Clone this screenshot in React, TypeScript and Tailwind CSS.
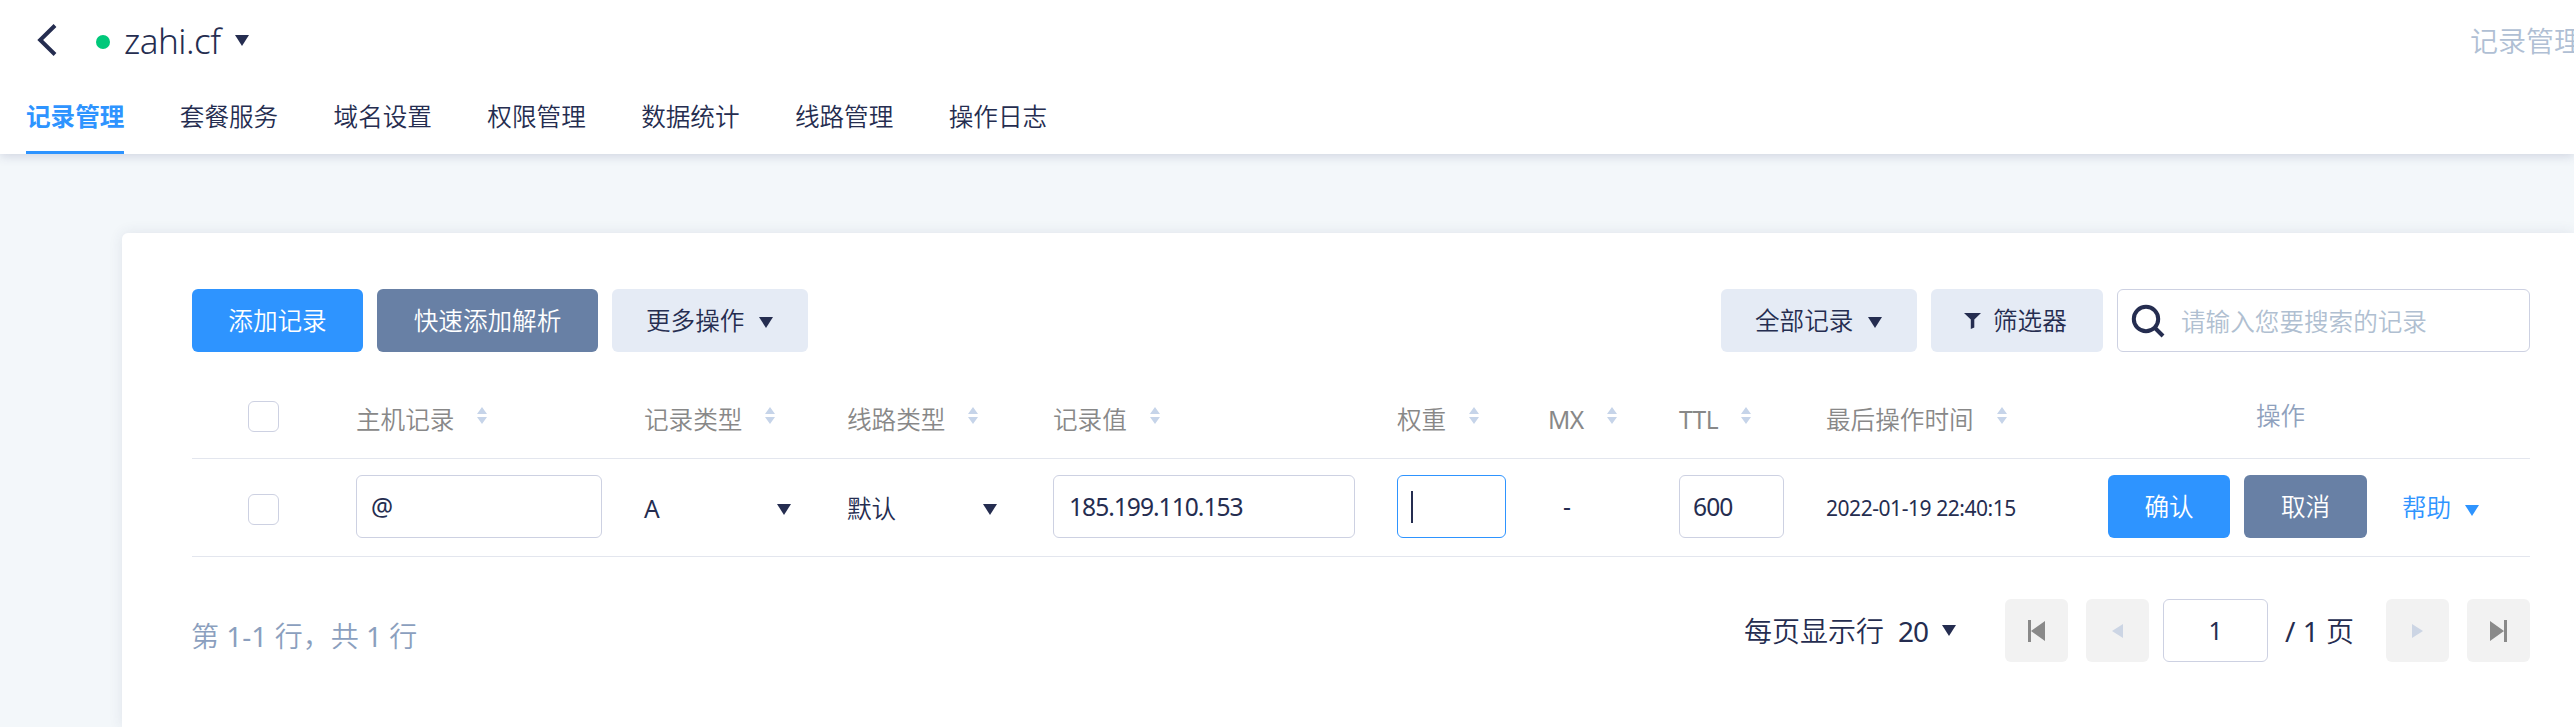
import type { ReactNode } from "react";

const tabs = ["记录管理", "套餐服务", "域名设置", "权限管理", "数据统计", "线路管理", "操作日志"];

const columns = ["主机记录", "记录类型", "线路类型", "记录值", "权重", "MX", "TTL", "最后操作时间"];

const rowGrid =
  "grid grid-cols-[164px_288px_203px_206px_344px_151px_131px_147px_282px_422px] border-b border-[#e3e6ee]";

function Caret({ className = "" }: { className?: string }) {
  return (
    <svg className={"shrink-0 " + className} width="14" height="11" viewBox="0 0 14 11" fill="currentColor">
      <path d="M0 0H14L7 11Z" />
    </svg>
  );
}

function SortIcon({ className = "" }: { className?: string }) {
  return (
    <svg className={"shrink-0 text-[#c6d4e9] " + className} width="10" height="17" viewBox="0 0 10 17" fill="currentColor">
      <path d="M5 0L10 7H0ZM0 10H10L5 17Z" />
    </svg>
  );
}

function Checkbox() {
  return <span className="block size-[31px] rounded-[6px] border border-[#cdd1e2] bg-white" />;
}

function Field({ className = "", children }: { className?: string; children?: ReactNode }) {
  return (
    <div className={"flex h-[63px] items-center rounded-[6px] border bg-white " + className}>{children}</div>
  );
}

function PageButton({ className = "", children }: { className?: string; children: ReactNode }) {
  return (
    <button className={"flex size-[63px] items-center justify-center rounded-[6px] bg-[#f2f2f2] " + className}>
      {children}
    </button>
  );
}

export default function App() {
  return (
    <div className="flex h-[727px] w-[2574px] flex-col overflow-hidden bg-[#f3f7fa] font-['Noto_Sans','Noto_Sans_CJK_SC',sans-serif] text-[24.6px] leading-none font-[350] whitespace-nowrap text-[#252d50]">
      <header className="relative flex h-[154px] shrink-0 flex-col bg-white shadow-[0_2px_10px_rgba(60,70,120,0.2)]">
        <div className="flex h-[79px] items-center">
          <svg className="ml-[37px]" width="20" height="32" viewBox="0 0 20 32" fill="none" stroke="currentColor" strokeWidth="4">
            <path d="M18 1.5L3.2 16L18 30.5" />
          </svg>
          <span className="mt-[5px] ml-[39px] size-[14px] rounded-full bg-[#00c87a]" />
          <span className="mt-[2px] ml-[14px] w-[98px] text-[35px] font-light tracking-[-0.5px]">zahi.cf</span>
          <Caret className="mt-[2px] ml-[13px]" />
          <span className="mt-[2px] ml-auto w-[104px] overflow-hidden py-2 text-[28px] text-[#b0bfd4]">记录管理</span>
        </div>
        <nav className="ml-[26px] flex h-[75px] gap-[55.4px]">
          {tabs.map((t, i) => (
            <a
              key={t}
              className={
                i === 0
                  ? "flex items-center border-b-[3px] border-[#2e94ff] pt-[4px] font-bold text-[#2e94ff]"
                  : "flex items-center border-b-[3px] border-transparent pt-[4px]"
              }
            >
              {t}
            </a>
          ))}
        </nav>
      </header>

      <main className="mt-[79px] ml-[122px] flex flex-1 flex-col rounded-tl-[6px] bg-white pr-[44px] pl-[70px] shadow-[0_0_14px_rgba(50,60,100,0.1)]">
        <div className="mt-[56px] flex h-[63px]">
          <button className="w-[171px] rounded-[6px] bg-[#2e94ff] pt-[2px] text-white">添加记录</button>
          <button className="ml-[14px] w-[221px] rounded-[6px] bg-[#6880a5] pt-[2px] text-white">快速添加解析</button>
          <button className="ml-[14px] flex w-[196px] items-center rounded-[6px] bg-[#e5ebf5] pt-[2px] pl-[34px]">
            更多操作
            <Caret className="mt-[2px] ml-[15px]" />
          </button>
          <button className="ml-auto flex w-[196px] items-center rounded-[6px] bg-[#e5ebf5] pt-[2px] pl-[34px]">
            全部记录
            <Caret className="mt-[2px] ml-[15px]" />
          </button>
          <button className="ml-[14px] flex w-[172px] items-center rounded-[6px] bg-[#e5ebf5] pl-[33px]">
            <svg width="17" height="16" viewBox="0 0 17 16" fill="currentColor">
              <path d="M0 0H17L10.3 6.5V14.5L6.8 16V6.5Z" />
            </svg>
            <span className="mt-[2px] ml-[12px]">筛选器</span>
          </button>
          <Field className="ml-[14px] w-[413px] border-[#cdd1e2] pl-[13px] text-[#b0bfd1]">
            <svg width="34" height="34" viewBox="0 0 34 34" fill="none" stroke="#252d50" strokeWidth="4">
              <circle cx="15" cy="15" r="12.2" />
              <path d="M23.5 23.5L32 32" />
            </svg>
            <span className="mt-[4px] ml-[16px]">请输入您要搜索的记录</span>
          </Field>
        </div>

        <div className={rowGrid + " h-[107px] text-[#888888]"}>
          <div className="pt-[49px] pl-[56px]">
            <Checkbox />
          </div>
          {columns.map((label) => (
            <div key={label} className="flex h-full items-start pt-[55px]">
              <span className={label === "MX" || label === "TTL" ? "mt-[1px] font-normal tracking-[-0.6px]" : "mt-[1px]"}>
                {label}
              </span>
              <SortIcon className="ml-[23px]" />
            </div>
          ))}
          <div className="pt-[52px] pl-[148px] text-[#8fa1bd]">操作</div>
        </div>

        <div className={rowGrid + " h-[98px] items-center pb-[2px]"}>
          <div className="pt-[6px] pl-[56px]">
            <Checkbox />
          </div>
          <Field className="w-[246px] border-[#cdd1e2] pt-[2px] pl-[14px] font-normal">@</Field>
          <div className="flex items-center pt-[5px]">
            <span className="w-[133px] font-normal">A</span>
            <Caret />
          </div>
          <div className="flex items-center pt-[5px]">
            <span className="w-[136px]">默认</span>
            <Caret />
          </div>
          <Field className="w-[302px] border-[#cdd1e2] pt-[2px] pl-[15px] font-normal tracking-[-1px]">185.199.110.153</Field>
          <Field className="w-[109px] border-[#2e94ff] pl-[13px]">
            <span className="h-[32px] w-[2px] bg-[#252d50]" />
          </Field>
          <div className="pt-[2px] pl-[15px] font-normal">-</div>
          <Field className="w-[105px] border-[#cdd1e2] pt-[2px] pl-[13px] font-normal tracking-[-0.9px]">600</Field>
          <div className="pt-[4px] text-[21px] font-normal tracking-[-0.45px]">2022-01-19 22:40:15</div>
          <div className="flex items-center">
            <button className="h-[63px] w-[122px] rounded-[6px] bg-[#2e94ff] pt-[2px] text-white">确认</button>
            <button className="ml-[14px] h-[63px] w-[123px] rounded-[6px] bg-[#6880a5] pt-[2px] text-white">取消</button>
            <a className="ml-[35px] flex items-center pt-[4px] text-[#2e94ff]">
              帮助
              <Caret className="mt-[4px] ml-[14px]" />
            </a>
          </div>
        </div>

        <div className="mt-[42px] flex h-[63px] items-center text-[28px]">
          <span className="mt-[10px] -ml-px text-[#8b9fbe]">
            第<span className="font-normal"> 1-1 </span>行，共<span className="font-normal"> 1 </span>行
          </span>
          <span className="ml-auto pt-[1px]">每页显示行</span>
          <span className="ml-[14px] w-[29px] pt-[1px] font-normal tracking-[-1px]">20</span>
          <Caret className="ml-[15px]" />
          <PageButton className="ml-[49px] text-[#8a8a8a]">
            <svg width="17" height="22" viewBox="0 0 17 22" fill="currentColor">
              <path d="M0 0H3V22H0ZM17 1V21L3 11Z" />
            </svg>
          </PageButton>
          <PageButton className="ml-[18px] text-[#ccd5e4]">
            <svg width="11" height="14" viewBox="0 0 11 14" fill="currentColor">
              <path d="M11 0V14L0 7Z" />
            </svg>
          </PageButton>
          <Field className="ml-[14px] w-[105px] justify-center border-[#cdd1e2] pt-[2px] text-[24.5px] font-normal">1</Field>
          <span className="ml-[17px] w-[69px] pt-[1px]">
            <span className="font-normal">/ 1 </span>页
          </span>
          <PageButton className="ml-[32px] text-[#ccd5e4]">
            <svg width="11" height="14" viewBox="0 0 11 14" fill="currentColor">
              <path d="M0 0V14L11 7Z" />
            </svg>
          </PageButton>
          <PageButton className="ml-[18px] text-[#8a8a8a]">
            <svg width="17" height="22" viewBox="0 0 17 22" fill="currentColor">
              <path d="M14 0H17V22H14ZM0 1V21L14 11Z" />
            </svg>
          </PageButton>
        </div>
      </main>
    </div>
  );
}
